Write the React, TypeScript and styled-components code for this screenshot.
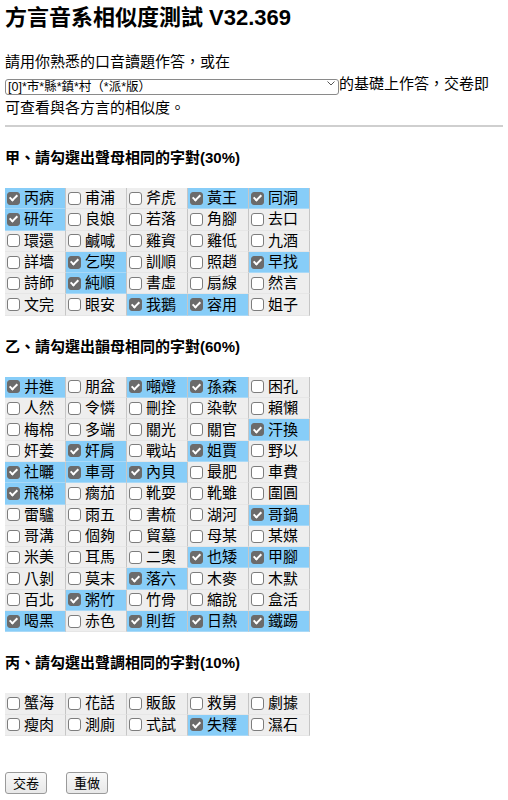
import { useState } from "react";
import styled, { createGlobalStyle } from "styled-components";

const GlobalStyle = createGlobalStyle`
  body {
    margin: 5px;
    background: #ffffff;
    color: #000000;
    font-family: "Liberation Sans", "Noto Sans CJK TC", sans-serif;
  }
`;

const Page = styled.main`
  width: 498px;
`;

const Title = styled.h1`
  margin: 0;
  font-size: 22px;
  line-height: 26px;
  font-weight: bold;
`;

const Intro = styled.p`
  margin: 20px 0 0;
  font-size: 15px;
  line-height: 22px;
`;

const SelectWrap = styled.span`
  position: relative;
  display: inline-block;
  vertical-align: -2px;
`;

const VersionSelect = styled.select`
  appearance: none;
  width: 334px;
  height: 16px;
  margin: 0;
  padding: 0 0 0 2px;
  border: 1px solid #8a8a8a;
  border-radius: 3px;
  background: #ffffff;
  font-family: "Liberation Sans", "Noto Sans CJK TC", sans-serif;
  font-size: 12.5px;
  line-height: 14px;
  color: #000000;
`;

const Chevron = styled.svg`
  position: absolute;
  right: 4px;
  top: 6px;
  pointer-events: none;
`;

const Rule = styled.hr`
  margin: 6px 0 0;
  border: 0;
  height: 2px;
  background: #cfcfcf;
`;

const SectionTitle = styled.h3`
  margin: 21px 0 0;
  font-size: 15px;
  line-height: 20px;
  font-weight: bold;
`;

const Grid = styled.div`
  display: grid;
  grid-template-columns: repeat(5, 61px);
  grid-auto-rows: 21.3px;
  margin-top: 20px;
  width: 305px;
`;

const Cell = styled.label<{ $on: boolean }>`
  display: flex;
  align-items: center;
  gap: 4px;
  padding-left: 2px;
  box-sizing: border-box;
  background: ${(p) => (p.$on ? "#87cdf8" : "#eeeeee")};
  border-right: 1px solid #c6c6c6;
  border-bottom: 1px solid ${(p) => (p.$on ? "#a9d9f7" : "#e6e6e6")};
  font-size: 15px;
  line-height: 18px;
  white-space: nowrap;
  cursor: pointer;
`;

const Box = styled.input`
  appearance: none;
  flex: none;
  width: 13px;
  height: 13px;
  margin: 0;
  border: 1px solid #7d7d7d;
  border-radius: 3px;
  background: #ffffff;
  display: grid;
  place-items: center;

  &:checked {
    border-color: #6b6b6b;
    background: #6b6b6b;
  }
  &:checked::after {
    content: "";
    width: 3px;
    height: 6px;
    margin-top: -2px;
    border: solid #ffffff;
    border-width: 0 2px 2px 0;
    transform: rotate(45deg);
  }
`;

const Buttons = styled.div`
  display: flex;
  gap: 19px;
  margin-top: 36px;
`;

const Button = styled.button`
  height: 22px;
  padding: 0 7px;
  border: 1px solid #9a9a9a;
  border-radius: 3px;
  background: linear-gradient(#f8f8f8, #e8e8e8);
  font-family: "Liberation Sans", "Noto Sans CJK TC", sans-serif;
  font-size: 13px;
  color: #000000;
`;

// "!" marks a pair that is ticked
const initials = [
  ["!丙病", "甫浦", "斧虎", "!黃王", "!同洞"],
  ["!研年", "良娘", "若落", "角腳", "去口"],
  ["環還", "鹹喊", "雞資", "雞低", "九酒"],
  ["詳墻", "!乞喫", "訓順", "照趙", "!早找"],
  ["詩師", "!純順", "書虛", "扇線", "然言"],
  ["文完", "眼安", "!我鵝", "!容用", "姐子"],
];

const finals = [
  ["!井進", "朋盆", "!噸燈", "!孫森", "困孔"],
  ["人然", "令憐", "刪拴", "染軟", "賴懶"],
  ["梅棉", "多端", "關光", "關官", "!汗換"],
  ["奸姜", "!奸肩", "戰站", "!姐賈", "野以"],
  ["!社曬", "!車哥", "!內貝", "最肥", "車費"],
  ["!飛梯", "瘸茄", "靴耍", "靴雖", "圍圓"],
  ["雷驢", "雨五", "書梳", "湖河", "!哥鍋"],
  ["哥溝", "個夠", "貿墓", "母某", "某媒"],
  ["米美", "耳馬", "二奧", "!也矮", "!甲腳"],
  ["八剝", "莫末", "!落六", "木麥", "木默"],
  ["百北", "!粥竹", "竹骨", "縮說", "盒活"],
  ["!喝黑", "赤色", "!則哲", "!日熱", "!鐵踢"],
];

const tones = [
  ["蟹海", "花話", "販飯", "救舅", "劇據"],
  ["瘦肉", "測廁", "式試", "!失釋", "濕石"],
];

const PairGrid = ({ rows }: { rows: string[][] }) => {
  const [ticks, setTicks] = useState(() => rows.map((r) => r.map((c) => c.startsWith("!"))));

  const toggle = (i: number, j: number) => {
    setTicks((t) => t.map((r, a) => r.map((v, b) => (a === i && b === j ? !v : v))));
  };

  return (
    <Grid>
      {rows.map((row, i) =>
        row.map((pair, j) => (
          <Cell key={`${i}-${j}`} $on={ticks[i][j]}>
            <Box type="checkbox" checked={ticks[i][j]} onChange={() => toggle(i, j)} />
            {pair.replace("!", "")}
          </Cell>
        ))
      )}
    </Grid>
  );
};

const App = () => {
  return (
    <Page>
      <GlobalStyle />
      <Title>方言音系相似度測試 V32.369</Title>
      <Intro>
        請用你熟悉的口音讀題作答，或在
        <SelectWrap>
          <VersionSelect defaultValue="0">
            <option value="0">[0]*市*縣*鎮*村（*派*版）</option>
          </VersionSelect>
          <Chevron width="8" height="5" viewBox="0 0 8 5">
            <path d="M0.5 0.5 L4 4 L7.5 0.5" fill="none" stroke="#555" strokeWidth="1" />
          </Chevron>
        </SelectWrap>
        的基礎上作答，交卷即可查看與各方言的相似度。
      </Intro>
      <Rule />

      <SectionTitle>甲、請勾選出聲母相同的字對(30%)</SectionTitle>
      <PairGrid rows={initials} />

      <SectionTitle>乙、請勾選出韻母相同的字對(60%)</SectionTitle>
      <PairGrid rows={finals} />

      <SectionTitle>丙、請勾選出聲調相同的字對(10%)</SectionTitle>
      <PairGrid rows={tones} />

      <Buttons>
        <Button type="button">交卷</Button>
        <Button type="button">重做</Button>
      </Buttons>
    </Page>
  );
};

export default App;
